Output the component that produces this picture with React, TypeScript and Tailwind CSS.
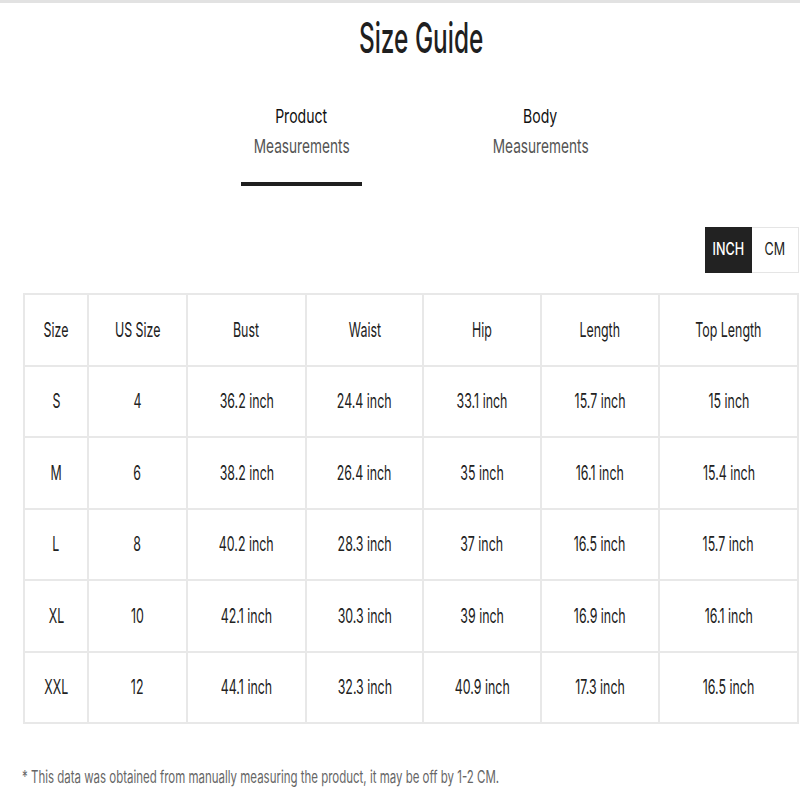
import React from "react";

const cols = ["Size", "US Size", "Bust", "Waist", "Hip", "Length", "Top Length"];
const rows = [
  ["S", "4", "36.2 inch", "24.4 inch", "33.1 inch", "15.7 inch", "15 inch"],
  ["M", "6", "38.2 inch", "26.4 inch", "35 inch", "16.1 inch", "15.4 inch"],
  ["L", "8", "40.2 inch", "28.3 inch", "37 inch", "16.5 inch", "15.7 inch"],
  ["XL", "10", "42.1 inch", "30.3 inch", "39 inch", "16.9 inch", "16.1 inch"],
  ["XXL", "12", "44.1 inch", "32.3 inch", "40.9 inch", "17.3 inch", "16.5 inch"],
];

function Cell({ text }: { text: string }) {
  return (
    <div className="h-[71.5px] border-r-2 border-b-2 border-[#e8e8e8] flex items-center justify-center text-[20px] leading-[24px] text-[#222]">
      <span className="inline-block whitespace-nowrap scale-x-[0.62]">{text}</span>
    </div>
  );
}

export default function App() {
  return (
    <div className="w-[800px] h-[800px] bg-white overflow-hidden font-['Inter',sans-serif] text-[#222]">
      <div className="h-[3px] bg-[#e2e2e2]" />
      <div className="mt-[14px] h-[42px] pl-[42px] text-center text-[42px] leading-[42px] font-medium text-[#1f1f1f]">
        <span className="inline-block whitespace-nowrap scale-x-[0.58]">Size Guide</span>
      </div>
      <div className="mt-[43px] flex pl-[241px] gap-[118px]">
        <div className="w-[121px] flex flex-col items-center">
          <div className="text-[19px] leading-[30px] text-[#111] whitespace-nowrap">
            <span className="inline-block scale-x-[0.74]">Product</span>
          </div>
          <div className="text-[19px] leading-[30px] text-[#555] whitespace-nowrap">
            <span className="inline-block scale-x-[0.72]">Measurements</span>
          </div>
          <div className="mt-[20px] h-[4px] w-full bg-[#1f1f1f]" />
        </div>
        <div className="w-[121px] flex flex-col items-center">
          <div className="text-[19px] leading-[30px] text-[#111] whitespace-nowrap">
            <span className="inline-block scale-x-[0.74]">Body</span>
          </div>
          <div className="text-[19px] leading-[30px] text-[#555] whitespace-nowrap">
            <span className="inline-block scale-x-[0.72]">Measurements</span>
          </div>
          <div className="mt-[20px] h-[4px] w-full" />
        </div>
      </div>
      <div className="mt-[41px] flex justify-end pr-[1px]">
        <div className="w-[47px] h-[46px] bg-[#222] text-white flex items-center justify-center text-[17px] font-medium">
          <span className="inline-block scale-x-[0.74]">INCH</span>
        </div>
        <div className="w-[47px] h-[46px] border border-[#e5e5e5] border-l-0 flex items-center justify-center text-[17px] text-[#222]">
          <span className="inline-block scale-x-[0.74]">CM</span>
        </div>
      </div>
      <div className="mt-[20px] ml-[23px] w-[776px] border-l-2 border-t-2 border-[#e8e8e8] grid grid-cols-[64px_99px_119px_117px_118px_118px_139px]">
        {cols.map((c) => (
          <Cell key={c} text={c} />
        ))}
        {rows.map((r, i) => r.map((t, j) => <Cell key={i + "-" + j} text={t} />))}
      </div>
      <div className="mt-[43px] pl-[22px] text-[17px] leading-[20px] text-[#666] whitespace-nowrap">
        <span className="inline-block origin-left scale-x-[0.675]">
          * This data was obtained from manually measuring the product, it may be off by 1-2 CM.
        </span>
      </div>
    </div>
  );
}
